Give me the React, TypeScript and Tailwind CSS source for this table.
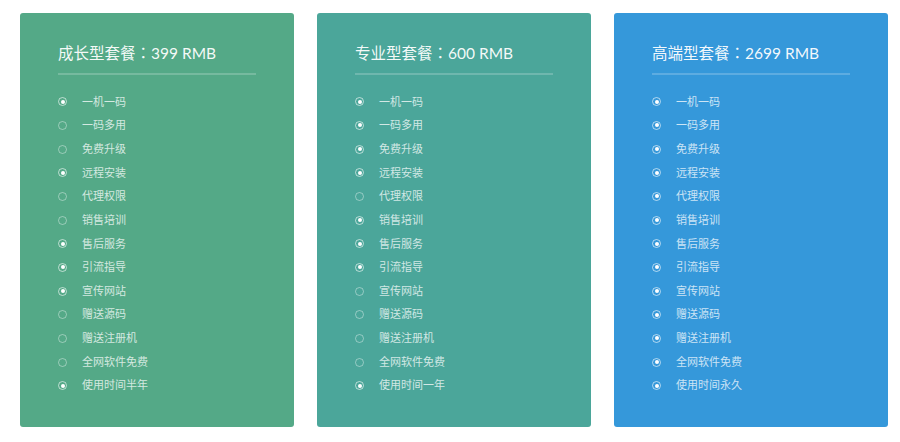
import React from "react";

type Plan = {
  name: string;
  price: string;
  bg: string;
  checks: boolean[];
  last: string;
};

const features = [
  "一机一码",
  "一码多用",
  "免费升级",
  "远程安装",
  "代理权限",
  "销售培训",
  "售后服务",
  "引流指导",
  "宣传网站",
  "赠送源码",
  "赠送注册机",
  "全网软件免费",
];

const plans: Plan[] = [
  {
    name: "成长型套餐",
    price: "399 RMB",
    bg: "bg-[#54a987]",
    checks: [true, false, false, true, false, false, true, true, true, false, false, false, true],
    last: "使用时间半年",
  },
  {
    name: "专业型套餐",
    price: "600 RMB",
    bg: "bg-[#4ba69a]",
    checks: [true, true, true, true, false, true, true, true, false, false, false, false, true],
    last: "使用时间一年",
  },
  {
    name: "高端型套餐",
    price: "2699 RMB",
    bg: "bg-[#3598da]",
    checks: [true, true, true, true, true, true, true, true, true, true, true, true, true],
    last: "使用时间永久",
  },
];

function Radio({ on }: { on: boolean }) {
  return (
    <span
      className={
        "flex h-[9px] w-[9px] shrink-0 items-center justify-center rounded-full border " +
        (on ? "border-white/60" : "border-white/40")
      }
    >
      {on && <span className="h-[4px] w-[4px] rounded-full bg-white" />}
    </span>
  );
}

function PlanCard({ plan }: { plan: Plan }) {
  const items = [...features, plan.last];
  return (
    <div className={`w-[274px] h-[414px] rounded-[3px] pl-[38px] pt-[27px] ${plan.bg}`}>
      <h3 className="text-[15.5px] leading-[24px] text-white/95">
        {plan.name}
        <span style={{ fontFamily: '"Noto Sans CJK JP", sans-serif' }}>：</span>
        {plan.price}
      </h3>
      <div className="mt-[8px] h-[2px] w-[198px] bg-white/20" />
      <ul className="mt-[15px]">
        {items.map((f, i) => (
          <li key={f} className="flex h-[23.67px] items-center">
            <Radio on={plan.checks[i]} />
            <span className="ml-[15px] text-[11px] text-white/75">{f}</span>
          </li>
        ))}
      </ul>
    </div>
  );
}

export default function App() {
  return (
    <div
      className="flex h-[442px] w-[900px] gap-[23px] bg-white pl-[20px] pt-[13px]"
      style={{ fontFamily: 'Lato, "Noto Sans CJK SC", sans-serif' }}
    >
      {plans.map((p) => (
        <PlanCard key={p.name} plan={p} />
      ))}
    </div>
  );
}
